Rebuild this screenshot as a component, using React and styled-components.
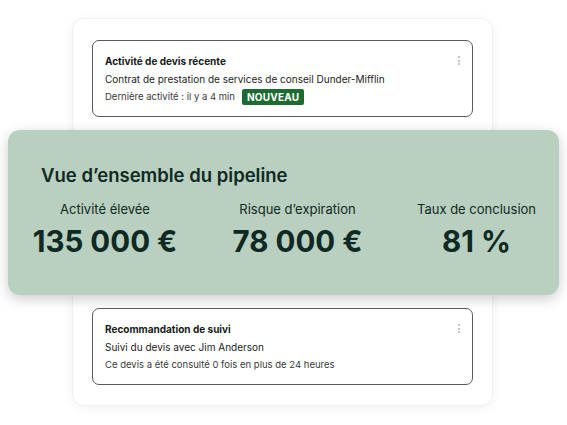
import React from 'react';
import styled, { createGlobalStyle } from 'styled-components';

const GlobalStyle = createGlobalStyle`
  html, body {
    margin: 0;
    padding: 0;
    background: #ffffff;
  }
  body {
    font-family: Inter, "Liberation Sans", sans-serif;
    -webkit-font-smoothing: antialiased;
  }
`;

const Page = styled.div`
  width: 567px;
  height: 425px;
  padding-top: 18px;
  box-sizing: border-box;
  overflow: hidden;
`;

const Board = styled.div`
  margin-left: 72px;
  width: 421px;
  box-sizing: border-box;
  padding: 21px 19px 20px;
  background: #ffffff;
  border: 1px solid #f1f1f1;
  border-radius: 12px;
  box-shadow: 0 2px 10px rgba(0, 0, 0, 0.06);
  display: flex;
  flex-direction: column;
`;

const QuoteCard = styled.div`
  position: relative;
  height: 77px;
  box-sizing: border-box;
  padding: 11px 12px 0;
  border: 1px solid #5a5a5a;
  border-radius: 7px;
  background: #ffffff;
  display: flex;
  flex-direction: column;
`;

const CardTitle = styled.div`
  font-size: 10px;
  font-weight: 700;
  line-height: 18px;
  color: #151b18;
`;

const CardLine = styled.div`
  font-size: ${p => (p.$muted ? '9.5px' : '10px')};
  font-weight: 400;
  line-height: 18px;
  color: ${p => (p.$muted ? '#3a3a3a' : '#1c1c1c')};
  display: flex;
  align-items: center;
  gap: 7px;
`;

const Badge = styled.span`
  display: inline-flex;
  align-items: center;
  height: 16px;
  padding: 0 5px;
  border-radius: 2px;
  background: #1d6b30;
  color: #ffffff;
  font-size: 10px;
  font-weight: 700;
  letter-spacing: 0.2px;
`;

const Kebab = styled.div`
  position: absolute;
  top: 15px;
  right: 12px;
  display: flex;
  flex-direction: column;
  gap: 1.5px;

  span {
    width: 2px;
    height: 2px;
    border-radius: 50%;
    background: #b0b0b0;
  }
`;

const Pipeline = styled.div`
  margin: 13px -86px 13px -84px;
  height: 165px;
  box-sizing: border-box;
  padding: 33px 24px 0 25px;
  background: #b9cfbf;
  border-radius: 12px;
  box-shadow: 0 4px 14px rgba(0, 0, 0, 0.2);
  color: #0f2a22;
`;

const PipelineTitle = styled.h2`
  margin: 0 0 0 8px;
  font-size: 18.5px;
  font-weight: 600;
  line-height: 24px;
`;

const Stats = styled.div`
  margin-top: 13px;
  display: grid;
  grid-template-columns: 144px 128px 117px;
  justify-content: space-between;
`;

const Stat = styled.div`
  display: flex;
  flex-direction: column;
  align-items: center;
`;

const StatLabel = styled.div`
  font-size: 13px;
  font-weight: 400;
  line-height: 18px;
  white-space: nowrap;
`;

const StatValue = styled.div`
  margin-top: 6px;
  font-size: 29.5px;
  font-weight: 700;
  line-height: 34px;
  white-space: nowrap;
`;

const Dots = () => (
  <Kebab>
    <span />
    <span />
    <span />
  </Kebab>
);

const stats = [
  { label: 'Activité élevée', value: '135 000 €' },
  { label: 'Risque d’expiration', value: '78 000 €' },
  { label: 'Taux de conclusion', value: '81 %' },
];

const App = () => (
  <>
    <GlobalStyle />
    <Page>
      <Board>
        <QuoteCard>
          <Dots />
          <CardTitle>Activité de devis récente</CardTitle>
          <CardLine>Contrat de prestation de services de conseil Dunder-Mifflin</CardLine>
          <CardLine $muted>
            Dernière activité : il y a 4 min
            <Badge>NOUVEAU</Badge>
          </CardLine>
        </QuoteCard>

        <Pipeline>
          <PipelineTitle>Vue d’ensemble du pipeline</PipelineTitle>
          <Stats>
            {stats.map(s => (
              <Stat key={s.label}>
                <StatLabel>{s.label}</StatLabel>
                <StatValue>{s.value}</StatValue>
              </Stat>
            ))}
          </Stats>
        </Pipeline>

        <QuoteCard>
          <Dots />
          <CardTitle>Recommandation de suivi</CardTitle>
          <CardLine>Suivi du devis avec Jim Anderson</CardLine>
          <CardLine $muted>Ce devis a été consulté 0 fois en plus de 24 heures</CardLine>
        </QuoteCard>
      </Board>
    </Page>
  </>
);

export default App;
